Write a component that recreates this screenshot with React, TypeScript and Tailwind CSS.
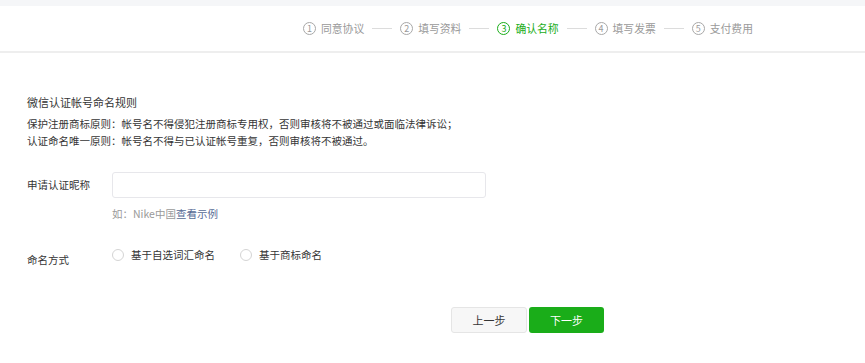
import React from "react";

const steps = ["同意协议", "填写资料", "确认名称", "填写发票", "支付费用"];
const active = 2;

const StepBar = () => (
  <div className="flex items-center">
    {steps.map((label, i) => {
      const on = i === active;
      return (
        <div key={label} className="flex items-center">
          {i > 0 && <span className="mx-2 w-[20px] h-px bg-[#dcdcdc]" />}
          <span
            className={
              on
                ? "flex items-center justify-center w-[13px] h-[13px] rounded-full border border-[#1aad19] text-[#1aad19] text-[9px] leading-none"
                : "flex items-center justify-center w-[13px] h-[13px] rounded-full border border-[#a8a8a8] text-[#9a9a9a] text-[9px] leading-none"
            }
          >
            {i + 1}
          </span>
          <span className={on ? "ml-[5px] text-[#1aad19]" : "ml-[5px] text-[#9a9a9a]"}>{label}</span>
        </div>
      );
    })}
  </div>
);

const Radio = ({ label }: { label: string }) => (
  <label className="flex items-center">
    <span className="w-[12px] h-[12px] rounded-full border border-[#d4d4d4] bg-white" />
    <span className="ml-[7px]">{label}</span>
  </label>
);

export default function App() {
  return (
    <div className="w-[865px] h-[363px] bg-white font-['Noto_Sans_CJK_SC',sans-serif] text-[#353535] text-[10.5px] overflow-hidden">
      {/* top strip */}
      <div className="h-[6px] bg-[#f5f6f8]" />

      {/* step header */}
      <div className="h-[47px] border-b-2 border-[#eeeeee] flex items-center pl-[303px] text-[10.8px]">
        <StepBar />
      </div>

      <div className="pl-[27px] pt-[41px]">
        {/* rules */}
        <p className="text-[11px] leading-[17px] mb-[4px]">微信认证帐号命名规则</p>
        <p className="leading-[17px]">保护注册商标原则：帐号名不得侵犯注册商标专用权，否则审核将不被通过或面临法律诉讼；</p>
        <p className="leading-[17px]">认证命名唯一原则：帐号名不得与已认证帐号重复，否则审核将不被通过。</p>

        {/* nickname */}
        <div className="flex items-center mt-[23px]">
          <span className="w-[85px]">申请认证昵称</span>
          <input className="w-[374px] h-[26px] border border-[#e7e7eb] rounded-[3px] outline-none px-2" />
        </div>
        <p className="ml-[85px] mt-[7px] leading-[17px] text-[#9a9a9a]">
          如：Nike中国<span className="text-[#576b95]">查看示例</span>
        </p>

        {/* naming type */}
        <div className="flex items-start mt-[25px]">
          <span className="w-[85px] pt-[5px]">命名方式</span>
          <div className="flex items-center gap-[25px]">
            <Radio label="基于自选词汇命名" />
            <Radio label="基于商标命名" />
          </div>
        </div>

        {/* actions */}
        <div className="flex gap-[2px] ml-[424px] mt-[39px]">
          <button className="w-[76px] h-[26px] rounded-[3px] border border-[#e5e5e5] bg-[#f7f7f7] text-[11px] text-[#353535]">
            上一步
          </button>
          <button className="w-[75px] h-[26px] rounded-[3px] bg-[#1aad19] text-[11px] text-white">
            下一步
          </button>
        </div>
      </div>
    </div>
  );
}
